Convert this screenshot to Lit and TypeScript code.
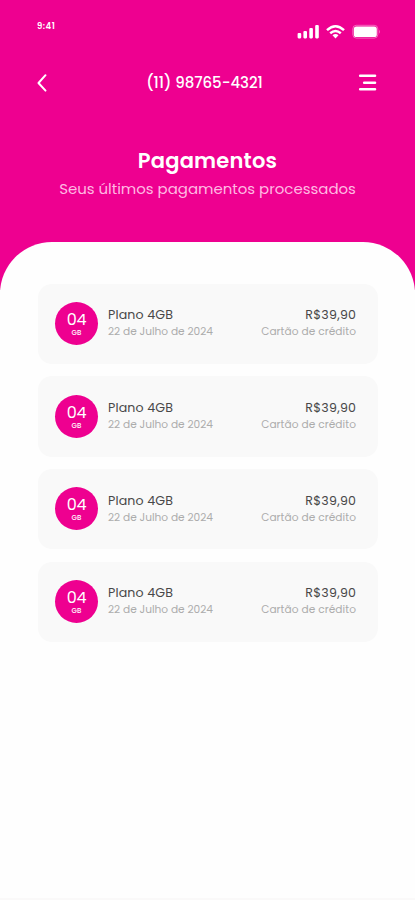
import { LitElement, html, css } from "lit";
import { customElement, property } from "lit/decorators.js";

const payments = Array.from({ length: 4 }, () => ({
  gb: "04",
  plan: "Plano 4GB",
  date: "22 de Julho de 2024",
  price: "R$39,90",
  method: "Cartão de crédito",
}));

@customElement("payment-card")
class PaymentCard extends LitElement {
  @property({ attribute: false }) payment = payments[0];

  static styles = css`
    :host {
      display: flex;
      align-items: flex-start;
      box-sizing: border-box;
      height: 80.4px;
      padding: 18.4px 22px 0 17px;
      border-radius: 14px;
      background: #f9f9f9;
      white-space: nowrap;
    }
    .badge {
      width: 43px;
      height: 43px;
      border-radius: 50%;
      background: #ee0090;
      color: #fff;
      display: flex;
      flex-direction: column;
      align-items: center;
      flex: none;
    }
    .amount {
      margin-top: 10px;
      font-size: 16px;
      line-height: 16px;
      letter-spacing: -0.4px;
    }
    .unit {
      margin-top: 1px;
      font-size: 7px;
      line-height: 8px;
      font-weight: 500;
    }
    .info {
      flex: 1;
      margin: 4.2px 0 0 10px;
    }
    .side {
      margin-top: 4.2px;
      display: flex;
      flex-direction: column;
      align-items: flex-end;
    }
    .main {
      font-size: 12.6px;
      line-height: 17px;
      color: #484848;
    }
    .sub {
      font-size: 10.6px;
      line-height: 17px;
      color: #acacac;
    }
    .plan { letter-spacing: 0.15px; }
    .price { letter-spacing: 0.25px; margin-right: -0.25px; }
    .date { letter-spacing: 0; }
    .method { letter-spacing: 0.06px; }
  `;

  render() {
    const p = this.payment;
    return html`
      <div class="badge"><span class="amount">${p.gb}</span><span class="unit">GB</span></div>
      <div class="info">
        <div class="main"><span class="plan">${p.plan}</span></div>
        <div class="sub"><span class="date">${p.date}</span></div>
      </div>
      <div class="side">
        <div class="main price">${p.price}</div>
        <div class="sub method">${p.method}</div>
      </div>
    `;
  }
}

@customElement("app-root")
class AppRoot extends LitElement {
  static styles = css`
    :host {
      display: block;
      box-sizing: border-box;
      height: 900px;
      overflow: hidden;
      background: linear-gradient(#ee0090 0 290px, #fefefe 290px);
      font-family: Poppins, Inter, "Liberation Sans", sans-serif;
      color: #fff;
    }
    .status {
      display: flex;
      justify-content: space-between;
      height: 60px;
      padding: 0 35px 0 37px;
      box-sizing: border-box;
    }
    .time {
      margin-top: 21px;
      font-size: 8.5px;
      line-height: 11px;
      font-weight: 600;
      letter-spacing: 0.5px;
    }
    .signals { margin-top: 22px; }
    svg { display: block; }
    .nav {
      display: flex;
      align-items: center;
      justify-content: space-between;
      height: 46px;
      padding: 0 38px 0 37px;
    }
    .slot { width: 19px; }
    .phone {
      font-size: 15px;
      font-weight: 500;
      letter-spacing: -0.05px;
      padding-right: 5px;
      margin-top: -1px;
    }
    .heading {
      height: 136px;
      box-sizing: border-box;
      padding-top: 41px;
      text-align: center;
      white-space: nowrap;
    }
    .title {
      font-size: 21px;
      line-height: 28px;
      font-weight: 600;
      letter-spacing: 0.2px;
    }
    .subtitle {
      margin-top: 2px;
      font-size: 15px;
      line-height: 23px;
      color: #ffb9e2;
      letter-spacing: -0.03px;
    }
    .sheet {
      height: 658px;
      box-sizing: border-box;
      padding: 41.6px 37px 0 38px;
      border-radius: 52px 52px 0 0;
      background: #fefefe;
      border-bottom: 2px solid #faf9f9;
      display: flex;
      flex-direction: column;
      gap: 12.3px;
    }
  `;

  render() {
    return html`
      <div class="status">
        <span class="time">9:41</span>
        <svg class="signals" width="86" height="20" viewBox="294 22 86 20" fill="#fff">
          <rect x="297.6" y="33" width="3.6" height="5.4" rx="1.1" />
          <rect x="303.4" y="31" width="3.6" height="7.4" rx="1.1" />
          <rect x="309.3" y="28" width="3.6" height="10.4" rx="1.1" />
          <rect x="315.2" y="25" width="3.6" height="13.4" rx="1.1" />
          <g fill="none" stroke="#fff" stroke-width="2.5">
            <path d="M327 30.2Q335.5 22.4 344 30.2" />
            <path d="M330.2 33.3Q335.5 28.8 340.8 33.3" />
          </g>
          <path d="M332.5 35.2Q335.5 33 338.5 35.2L335.5 38.6Z" />
          <rect x="352.8" y="25.3" width="25" height="12.8" rx="3.6" fill="none" stroke="#fff" stroke-opacity=".4" stroke-width="1" />
          <rect x="353.8" y="26.4" width="23" height="10.6" rx="2.6" />
          <path d="M379 29.8q2 2 0 4z" fill-opacity=".4" />
        </svg>
      </div>
      <div class="nav">
        <svg class="slot" width="19" height="20" viewBox="0 0 19 20" fill="none" stroke="#fff" stroke-width="2" stroke-linecap="round" stroke-linejoin="round">
          <path d="M8.5 2.2L1.5 10L8.5 17.6" />
        </svg>
        <span class="phone">(11) 98765-4321</span>
        <svg class="slot" width="19" height="20" viewBox="0 0 19 20" fill="none" stroke="#fff" stroke-width="2.6" stroke-linecap="round">
          <path d="M2.2 2.8H17M6.2 9.8H17M2.2 16.3H17" />
        </svg>
      </div>
      <div class="heading">
        <div class="title">Pagamentos</div>
        <div class="subtitle">Seus últimos pagamentos processados</div>
      </div>
      <div class="sheet">
        ${payments.map((p) => html`<payment-card .payment=${p}></payment-card>`)}
      </div>
    `;
  }
}
